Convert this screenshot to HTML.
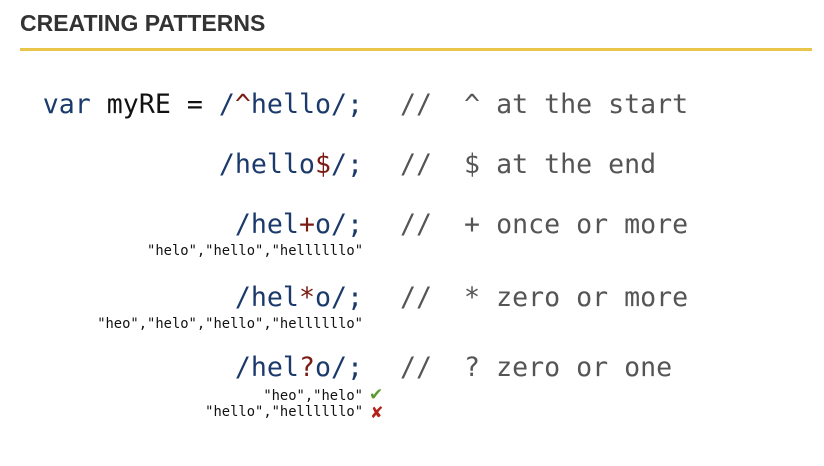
<!DOCTYPE html>
<html><head><meta charset="utf-8"><style>
body{margin:0;width:824px;height:466px;background:#fff;position:relative;overflow:hidden}
.h{position:absolute;left:20px;top:10px;font:bold 23px "Liberation Sans",sans-serif;color:#333;letter-spacing:0px}
.line{position:absolute;left:20px;top:48px;width:792px;height:3px;background:#e9c54a}
.c{position:absolute;font-family:"DejaVu Sans Mono",monospace;white-space:pre;line-height:1}
.big{font-size:26.6px}
.r{right:461px;text-align:right;color:#1b3a6b}
.m{left:400px;color:#555}
.s{font-size:13.8px;color:#111;right:461px;text-align:right}
.k{color:#111}.d{color:#7b1c14}
</style></head><body>
<div class="h">CREATING PATTERNS</div><div class="line"></div>
<div class="c big r" style="top:92px"><span>var</span> <span class="k">myRE =</span> /<span class="d">^</span>hello/;</div>
<div class="c big m" style="top:92px">//  ^ at the start</div>
<div class="c big r" style="top:152px">/hello<span class="d">$</span>/;</div>
<div class="c big m" style="top:152px">//  $ at the end</div>
<div class="c big r" style="top:212px">/hel<span class="d">+</span>o/;</div>
<div class="c big m" style="top:212px">//  + once or more</div>
<div class="c s" style="top:245px">"helo","hello","hellllllo"</div>
<div class="c big r" style="top:285px">/hel<span class="d">*</span>o/;</div>
<div class="c big m" style="top:285px">//  * zero or more</div>
<div class="c s" style="top:318px">"heo","helo","hello","hellllllo"</div>
<div class="c big r" style="top:355px">/hel<span class="d">?</span>o/;</div>
<div class="c big m" style="top:355px">//  ? zero or one</div>
<div class="c s" style="top:390px">"heo","helo"</div>
<div class="c s" style="top:406px">"hello","hellllllo"</div>
<div class="c" style="left:369px;top:387px;font-size:17px;color:#5a9a2e;font-family:'DejaVu Sans',sans-serif">✔</div>
<div class="c" style="left:370px;top:405px;font-size:16px;color:#b3221a;font-family:'DejaVu Sans',sans-serif">✘</div>
</body></html>
